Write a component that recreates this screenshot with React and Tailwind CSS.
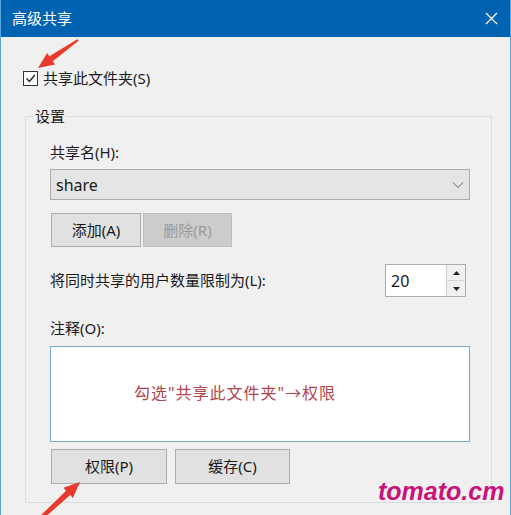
import React from 'react';

function Btn({ label, w, disabled }) {
  return (
    <button
      className={
        disabled
          ? 'h-full border border-[#bfbfbf] bg-[#cccccc] text-[#9a9a9a] text-[15px]'
          : 'h-full border border-[#adadad] bg-[#e1e1e1] text-[#1a1a1a] text-[15px]'
      }
      style={{ width: w }}
    >
      {label}
    </button>
  );
}

export default function App() {
  return (
    <div className="relative w-[511px] h-[515px] overflow-hidden bg-[#f0f0f0] border-x border-[#5aa6e0] font-['Noto_Sans','Noto_Sans_CJK_SC',sans-serif] text-[#1a1a1a]">
      <div className="h-[37px] bg-[#0063b1] flex items-center justify-between pl-[11px] pr-[12px] text-white text-[15px]">
        <span>高级共享</span>
        <svg width="13" height="13" viewBox="0 0 13 13">
          <path d="M1 1 L12 12 M12 1 L1 12" stroke="#fff" strokeWidth="1.2" />
        </svg>
      </div>

      <div className="pl-[24px] pr-[18px]">
        <div className="-ml-[2px] mt-[31px] h-[20px] flex items-center gap-[5px] text-[15px]">
          <div className="w-[15px] h-[15px] border border-[#333] bg-white flex items-center justify-center">
            <svg width="11" height="11" viewBox="0 0 11 11">
              <path d="M1.5 5.5 L4.5 8.5 L9.8 2" fill="none" stroke="#222" strokeWidth="1.4" />
            </svg>
          </div>
          <span>共享此文件夹(S)</span>
        </div>

        <fieldset className="mt-[18px] h-[397px] border border-[#dcdcdc] pl-[24px] pr-[21px]">
          <legend className="-ml-[16px] px-[1px] text-[15px] leading-[20px]">设置</legend>
          <div className="pt-[16px] text-[15px] leading-[20px]">共享名(H):</div>
          <div className="mt-[7px] h-[31px] border border-[#acacac] bg-[#e5e5e5] flex items-center justify-between pl-[5px] pr-[5px] text-[16px]">
            <span>share</span>
            <svg width="12" height="8" viewBox="0 0 12 8">
              <path d="M1 1.5 L6 6.5 L11 1.5" fill="none" stroke="#666" strokeWidth="1" />
            </svg>
          </div>
          <div className="mt-[13px] h-[34px] flex gap-[2px] pl-[1px]">
            <Btn label="添加(A)" w={90} />
            <Btn label="删除(R)" w={89} disabled />
          </div>

          <div className="mt-[17px] h-[33px] flex items-center justify-between pr-[4px]">
            <span className="text-[15px]">将同时共享的用户数量限制为(L):</span>
            <div className="h-full flex border border-[#adadad] bg-white">
              <div className="w-[60px] flex items-center pl-[5px] text-[16px]">20</div>
              <div className="w-[19px] flex flex-col border-l border-[#cfcfcf] bg-[#f0f0f0]">
                <div className="flex-1 flex items-center justify-center border-b border-[#d6d6d6]">
                  <svg width="7" height="4" viewBox="0 0 7 4"><path d="M0 4 L3.5 0 L7 4Z" fill="#222" /></svg>
                </div>
                <div className="flex-1 flex items-center justify-center">
                  <svg width="7" height="4" viewBox="0 0 7 4"><path d="M0 0 L3.5 4 L7 0Z" fill="#222" /></svg>
                </div>
              </div>
            </div>
          </div>

          <div className="mt-[21px] text-[15px] leading-[20px]">注释(O):</div>
          <div className="mt-[8px] h-[96px] border border-[#7aa6c8] bg-white flex items-center pl-[83px] pb-[2px]">
            <span className="text-[16px] text-[#b0454a] tracking-[1px]">勾选"共享此文件夹"→权限</span>
          </div>
          <div className="mt-[7px] h-[35px] flex gap-[8px] pl-[1px]">
            <Btn label="权限(P)" w={116} />
            <Btn label="缓存(C)" w={115} />
          </div>
        </fieldset>
      </div>

      <span className="absolute left-[377px] top-[473px] text-[25px] font-bold italic text-[#c8137a] font-['Liberation_Sans',sans-serif]">
        tomato.cm
      </span>

      <svg className="absolute inset-0 pointer-events-none" width="511" height="515" viewBox="0 0 511 515">
        <polygon
          points="37,68 54.1,64.5 51.8,61.3 77.6,40.8 76.4,39.2 48.4,56.3 46.1,53.1"
          fill="#e8392d"
        />
        <polygon
          points="79,482 71.9,498 69.2,495.1 41.4,519.5 38.6,516.5 65.2,490.7 62.4,487.7"
          fill="#e8392d"
        />
      </svg>
    </div>
  );
}
